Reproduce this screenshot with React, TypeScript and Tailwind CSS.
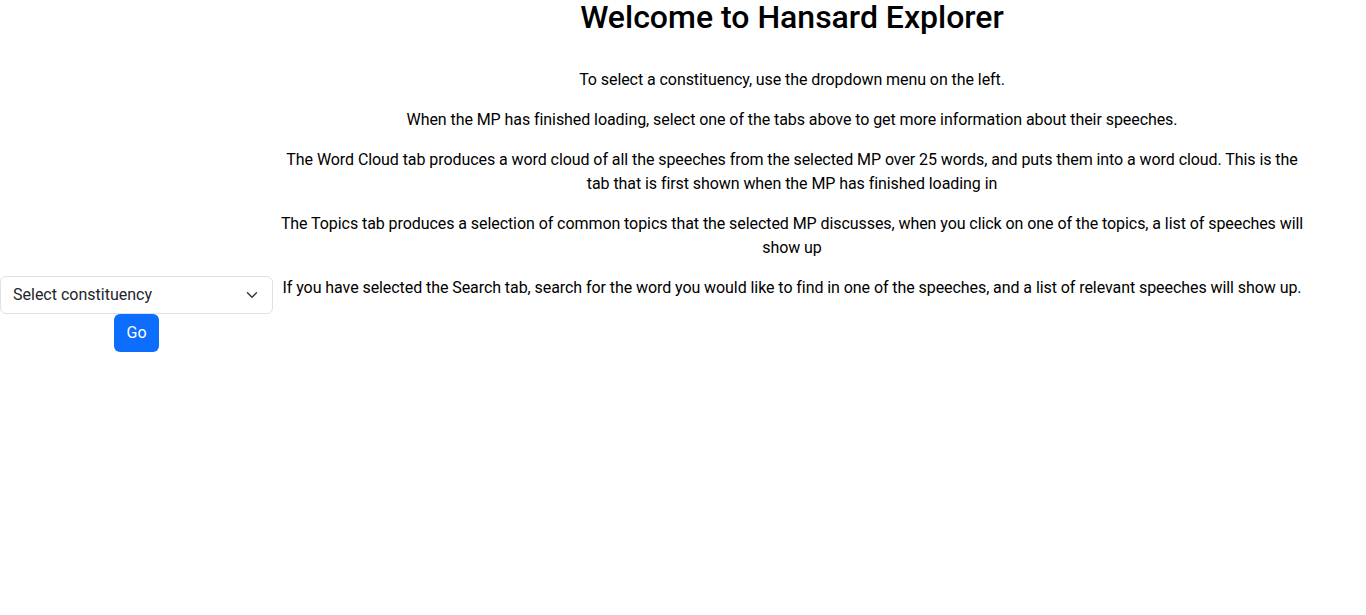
import { useState } from "react";

const paragraphs = [
  "To select a constituency, use the dropdown menu on the left.",
  "When the MP has finished loading, select one of the tabs above to get more information about their speeches.",
  "The Word Cloud tab produces a word cloud of all the speeches from the selected MP over 25 words, and puts them into a word cloud. This is the tab that is first shown when the MP has finished loading in",
  "The Topics tab produces a selection of common topics that the selected MP discusses, when you click on one of the topics, a list of speeches will show up",
  "If you have selected the Search tab, search for the word you would like to find in one of the speeches, and a list of relevant speeches will show up.",
];

export default function App() {
  const [constituency, setConstituency] = useState("");

  return (
    <div className="flex items-start min-h-screen bg-white text-black font-['Roboto',sans-serif] text-base leading-6">
      <div className="w-[273px] shrink-0 mt-[276px] flex flex-col items-center">
        <div className="relative w-full">
          <select
            value={constituency}
            onChange={(e) => setConstituency(e.target.value)}
            className="w-full h-[38px] appearance-none rounded-[6px] border border-[#dee2e6] bg-white pl-3 pr-9 text-base text-[#212529] outline-none"
          >
            <option value="">Select constituency</option>
            <option value="a">Aberavon</option>
            <option value="b">Barnsley Central</option>
          </select>
          <svg
            className="pointer-events-none absolute right-[15px] top-[13px] w-[12px] h-[12px]"
            viewBox="0 0 16 16"
            fill="none"
            stroke="#343a40"
            strokeWidth="2"
            strokeLinecap="round"
            strokeLinejoin="round"
          >
            <path d="m2 5 6 6 6-6" />
          </svg>
        </div>
        <button className="h-[38px] px-3 rounded-[6px] bg-[#0d6efd] text-white text-base">
          Go
        </button>
      </div>
      <div className="w-[1038px] shrink-0 px-[3px] text-center">
        <h1 className="text-[32px] leading-[34px] font-medium text-black mb-[34px]">
          Welcome to Hansard Explorer
        </h1>
        {paragraphs.map((p) => (
          <p key={p} className="mb-4 tracking-[-0.07px]">
            {p}
          </p>
        ))}
      </div>
    </div>
  );
}
